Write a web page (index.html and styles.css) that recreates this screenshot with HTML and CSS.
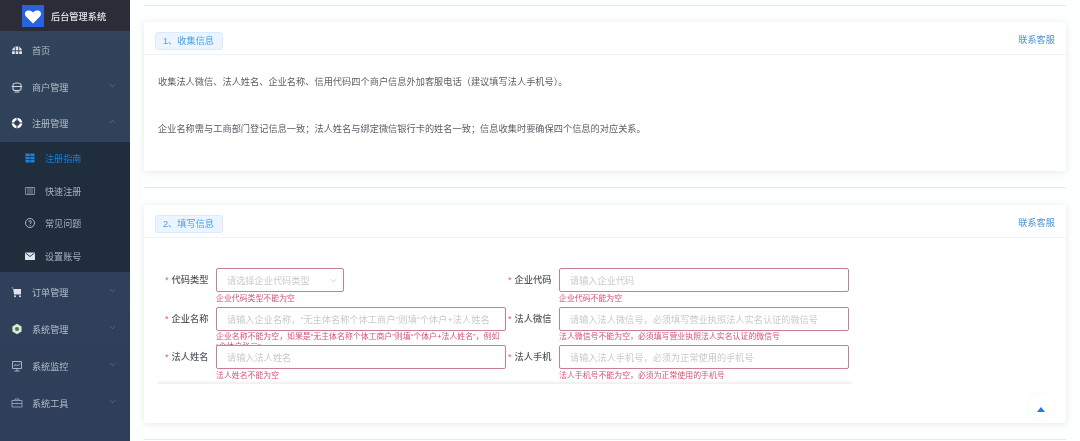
FILE: index.html
```html
<!DOCTYPE html>
<html lang="zh-CN">
<head>
<meta charset="utf-8">
<title>后台管理系统</title>
<link rel="stylesheet" href="styles.css">
</head>
<body>
<div class="app">
  <aside class="sidebar">
    <div class="brand">
      <span class="logo"><svg viewBox="0 0 22 22" width="22" height="22"><path d="M11 18.500 4 11.600C2.200 9.600 2.800 6.400 5.400 5.600 7.600 5 9.800 5.800 11 7.600 12.200 5.800 14.400 5 16.600 5.600 19.200 6.400 19.800 9.600 18 11.600Z" fill="#fff"/></svg></span>
      <span class="brand-name">后台管理系统</span>
    </div>
    <nav class="menu">
      <div class="item">
        <svg class="ico" viewBox="0 0 12 12"><path d="M1 10V7.500C1 4.500 3 2.500 6 2.500S11 4.500 11 7.500V10Z" fill="#dfe4ea"/><path d="M4.300 3v7M7.700 3v7M1 6.800h10" stroke="#304258" stroke-width=".9"/></svg>
        <span>首页</span>
      </div>
      <div class="item">
        <svg class="ico" viewBox="0 0 12 12" fill="none" stroke="#d3d9e0" stroke-width="1.100"><path d="M2 4C2 2.500 3.500 2 6 2S10 2.500 10 4V8C10 9 9 9.500 6 9.500S2 9 2 8Z"/><path d="M.8 5.500H11.200M3.500 11h5"/></svg>
        <span>商户管理</span>
        <svg class="arrow" viewBox="0 0 8 5"><path d="M1 1l3 3 3-3"/></svg>
      </div>
      <div class="item">
        <svg class="ico" viewBox="0 0 12 12"><circle cx="6" cy="6" r="4" fill="none" stroke="#fff" stroke-width="2.600"/><path d="M6 .8v10.400M.8 6h10.400" stroke="#304258" stroke-width="1"/></svg>
        <span>注册管理</span>
        <svg class="arrow" viewBox="0 0 8 5"><path d="M1 4l3-3 3 3"/></svg>
      </div>
      <div class="submenu">
        <div class="subitem is-active">
          <svg class="ico" viewBox="0 0 12 12"><path d="M1.500 1.500h9v9h-9z" fill="#1a83e0"/><path d="M1.500 4.500h9M1.500 7.500h9M6 1.500v9" stroke="#1f2d3d" stroke-width=".7"/></svg>
          <span>注册指南</span>
        </div>
        <div class="subitem">
          <svg class="ico" viewBox="0 0 12 12" fill="none" stroke="#9aa3ad" stroke-width=".8"><path d="M1.500 2.500h9v7h-9z"/><path d="M4 2.500v7M6 2.500v7M8 2.500v7"/></svg>
          <span>快速注册</span>
        </div>
        <div class="subitem">
          <svg class="ico" viewBox="0 0 12 12" fill="none" stroke="#c0c6cd" stroke-width=".9"><circle cx="6" cy="6" r="4.500"/><path d="M4.700 4.900C4.700 3.300 7.400 3.300 7.400 4.900 7.400 6 6 6 6 7.200M6 8.200v.9"/></svg>
          <span>常见问题</span>
        </div>
        <div class="subitem">
          <svg class="ico" viewBox="0 0 12 12"><path d="M1 2.500h10v7.500H1z" fill="#dfe4ea"/><path d="M1.500 3l4.500 3.500L10.500 3" fill="none" stroke="#1f2d3d" stroke-width=".9"/></svg>
          <span>设置账号</span>
        </div>
      </div>
      <div class="item">
        <svg class="ico" viewBox="0 0 12 12"><path d="M.5 1.500H2L3 8.500h7V3H2.300z" fill="#dfe4ea"/><circle cx="4" cy="10.300" r="1" fill="#dfe4ea"/><circle cx="9" cy="10.300" r="1" fill="#dfe4ea"/></svg>
        <span>订单管理</span>
        <svg class="arrow" viewBox="0 0 8 5"><path d="M1 1l3 3 3-3"/></svg>
      </div>
      <div class="item">
        <svg class="ico" viewBox="0 0 12 12"><path d="M6 .8l4.600 2.600v5.200L6 11.200 1.400 8.600V3.400z" fill="#d8e8d6"/><circle cx="6" cy="6" r="2" fill="#4a7a4a"/></svg>
        <span>系统管理</span>
        <svg class="arrow" viewBox="0 0 8 5"><path d="M1 1l3 3 3-3"/></svg>
      </div>
      <div class="item">
        <svg class="ico" viewBox="0 0 12 12" fill="none" stroke="#b9c1cb" stroke-width=".9"><path d="M1.500 1.500h9v7h-9zM3.500 11h5M6 8.500V11"/><path d="M3 6l2-1.500L6.500 6 9 3.500"/></svg>
        <span>系统监控</span>
        <svg class="arrow" viewBox="0 0 8 5"><path d="M1 1l3 3 3-3"/></svg>
      </div>
      <div class="item">
        <svg class="ico" viewBox="0 0 12 12" fill="none" stroke="#99a4b2" stroke-width=".9"><path d="M1 3.500h10v6.500H1zM4 3.500V2h4v1.500M1 6.500h10M6 5.700v1.600"/></svg>
        <span>系统工具</span>
        <svg class="arrow" viewBox="0 0 8 5"><path d="M1 1l3 3 3-3"/></svg>
      </div>
    </nav>
  </aside>
  <main class="main">
    <hr class="rule">
    <section class="card card-info">
      <header class="card-head">
        <span class="tag">1、收集信息</span>
        <a class="link">联系客服</a>
      </header>
      <div class="card-body">
        <p class="para">收集法人微信、法人姓名、企业名称、信用代码四个商户信息外加客服电话（建议填写法人手机号）。</p>
        <p class="para">企业名称需与工商部门登记信息一致；法人姓名与绑定微信银行卡的姓名一致；信息收集时要确保四个信息的对应关系。</p>
      </div>
    </section>
    <hr class="rule">
    <section class="card card-form">
      <header class="card-head">
        <span class="tag">2、填写信息</span>
        <a class="link">联系客服</a>
      </header>
      <div class="form-wrap">
        <form class="form">
          <div class="field">
            <label class="label"><i>*</i>代码类型</label>
            <div class="control">
              <div class="input select"><span class="ph">请选择企业代码类型</span><svg class="caret" viewBox="0 0 8 5"><path d="M1 1l3 3 3-3"/></svg></div>
              <div class="err">企业代码类型不能为空</div>
            </div>
          </div>
          <div class="field">
            <label class="label"><i>*</i>企业代码</label>
            <div class="control">
              <div class="input"><span class="ph">请输入企业代码</span></div>
              <div class="err">企业代码不能为空</div>
            </div>
          </div>
          <div class="field">
            <label class="label"><i>*</i>企业名称</label>
            <div class="control">
              <div class="input"><span class="ph">请输入企业名称，“无主体名称个体工商户”则填“个体户+法人姓名</span></div>
              <div class="err">企业名称不能为空，如果是“无主体名称个体工商户”则填“个体户+法人姓名”，例如“个体户张三”</div>
            </div>
          </div>
          <div class="field">
            <label class="label"><i>*</i>法人微信</label>
            <div class="control">
              <div class="input"><span class="ph">请输入法人微信号，必须填写营业执照法人实名认证的微信号</span></div>
              <div class="err">法人微信号不能为空，必须填写营业执照法人实名认证的微信号</div>
            </div>
          </div>
          <div class="field">
            <label class="label"><i>*</i>法人姓名</label>
            <div class="control">
              <div class="input"><span class="ph">请输入法人姓名</span></div>
              <div class="err">法人姓名不能为空</div>
            </div>
          </div>
          <div class="field">
            <label class="label"><i>*</i>法人手机</label>
            <div class="control">
              <div class="input"><span class="ph">请输入法人手机号，必须为正常使用的手机号</span></div>
              <div class="err">法人手机号不能为空，必须为正常使用的手机号</div>
            </div>
          </div>
        </form>
      </div>
    </section>
    <hr class="rule">
    <button class="backtop" type="button" aria-label="top"><svg viewBox="0 0 8 5" width="8" height="5"><path d="M4 0 8 5H0Z" fill="#1a7fdc"/></svg></button>
  </main>
</div>
</body>
</html>
```
FILE: styles.css
```css
* { box-sizing: border-box; }
html, body { margin: 0; height: 100%; overflow: hidden; }
body {
  background: #fff;
  font-family: "Liberation Sans", "Noto Sans CJK SC", sans-serif;
  filter: blur(0.45px);
}
.app { display: flex; height: 441px; }

/* sidebar */
.sidebar {
  width: 130px;
  flex: none;
  background: linear-gradient(#31445a, #2f3e5a);
  color: #bfcbd9;
  overflow: hidden;
}
.brand {
  height: 31px;
  background: #2b2c38;
  display: flex;
  align-items: center;
  padding-left: 22px;
}
.logo {
  width: 22px;
  height: 22px;
  background: #2a62dd;
  display: block;
}
.logo svg { display: block; }
.brand-name {
  margin-left: 7px;
  font-size: 9.2px;
  font-weight: 500;
  color: #e4e6ea;
}
.menu { padding-top: .5px; }
.item {
  height: 36.8px;
  display: flex;
  align-items: center;
  padding-left: 11px;
  font-size: 9.1px;
  color: #b4bfcc;
  position: relative;
}
.item .ico { margin-right: 9px; }
.ico { width: 12px; height: 12px; flex: none; }
.arrow {
  position: absolute;
  right: 14px;
  top: 50%;
  width: 7px;
  height: 5px;
  margin-top: -4px;
  fill: none;
  stroke: #5f7087;
  stroke-width: .9;
}
.submenu { background: #1f2d3d; height: 130px; margin-bottom: 2px; }
.subitem {
  height: 32.500px;
  display: flex;
  align-items: center;
  padding-left: 24px;
  font-size: 9.1px;
  color: #a9b2bd;
}
.subitem .ico { margin-right: 9px; }
.subitem.is-active { color: #1a7fd8; }

/* main */
.main {
  flex: 1;
  min-width: 0;
  padding: 5px 14px 0;
  position: relative;
  background: #fdfefe;
}
.rule {
  border: 0;
  height: 1px;
  background: #e8e9eb;
  margin: 0;
}
.card {
  background: #fff;
  border-radius: 3px;
  box-shadow: 0 1px 7px rgba(0, 0, 0, .09);
  margin: 16px 0;
}
.card-info { height: 149px; }
.card-form { height: 218px; margin-top: 17px; }
.card-head {
  height: 33px;
  display: flex;
  align-items: center;
  justify-content: space-between;
  padding: 6px 11px 0;
  border-bottom: 1px solid #f2f3f5;
}
.tag {
  height: 18px;
  width: 68px;
  line-height: 16px;
  background: #ecf5ff;
  border: 1px solid #d9ecff;
  border-radius: 3px;
  color: #4aa0ee;
  font-size: 9.200px;
  padding-left: 7px;
  white-space: nowrap;
}
.link { color: #4d94d4; font-size: 9.200px; margin-top: -4px; }
.card-body { padding: 20px 14px 0; }
.para {
  margin: 0 0 33.300px;
  font-size: 9.210px;
  line-height: 14px;
  color: #5a5e66;
  white-space: nowrap;
}

/* form */
.form-wrap {
  height: 146px;
  width: 694px;
  margin-left: 14px;
  position: relative;
  overflow: hidden;
  padding: 30px 0 0 7px;
}
.form-wrap::after {
  content: "";
  position: absolute;
  left: 0;
  right: 0;
  bottom: 0;
  height: 4px;
  background: linear-gradient(rgba(238, 239, 240, 0), #eeeff0);
}
.form {
  display: grid;
  grid-template-columns: 343px 1fr;
  grid-auto-rows: 38.500px;
}
.field { display: flex; align-items: flex-start; }
.label {
  width: 43px;
  flex: none;
  height: 24px;
  line-height: 24px;
  font-size: 9.250px;
  color: #55585f;
  white-space: nowrap;
  text-align: right;
  font-weight: 500;
}
.label i { color: #e0557a; font-style: normal; margin-right: 3px; }
.control { margin-left: 8px; width: 290px; position: relative; }
.input {
  height: 24px;
  width: 290px;
  border: 1px solid #c97f92;
  border-radius: 2px;
  background: #fff;
  display: flex;
  align-items: center;
  padding-left: 10px;
  position: relative;
  z-index: 1;
}
.select { width: 128px; justify-content: space-between; padding-right: 6px; }
.ph { font-size: 9.200px; color: #c8cacd; white-space: nowrap; }
.caret { width: 7px; height: 5px; fill: none; stroke: #c0c4cc; stroke-width: .9; }
.err {
  position: absolute;
  left: 0;
  top: 25.500px;
  width: 290px;
  font-size: 7.900px;
  line-height: 9.500px;
  color: #dc4f75;
}

/* back to top */
.backtop {
  position: absolute;
  left: 898px;
  top: 394px;
  width: 26px;
  height: 26px;
  border: 0;
  border-radius: 50%;
  background: #fff;
  box-shadow: 0 0 5px rgba(0, 0, 0, .04);
  display: flex;
  align-items: center;
  justify-content: center;
  padding: 5px 0 0;
}
```
